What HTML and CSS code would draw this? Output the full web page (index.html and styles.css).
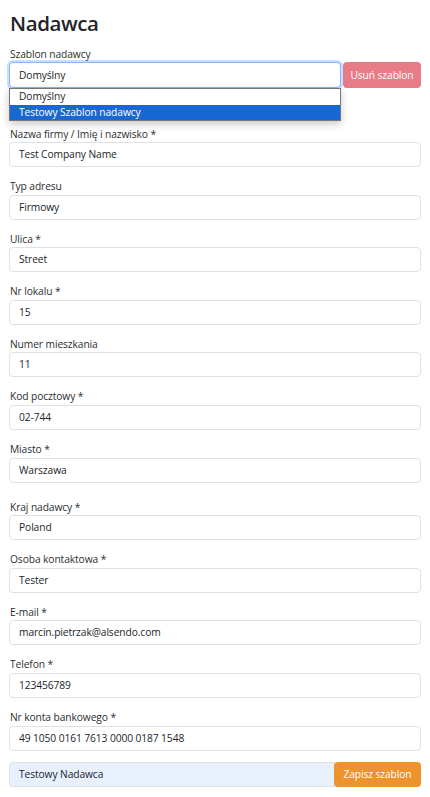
FILE: index.html
```html
<!DOCTYPE html>
<html lang="pl">
<head>
<meta charset="utf-8">
<title>Nadawca</title>
<link rel="stylesheet" href="styles.css">
</head>
<body>
<div class="page">
  <h1 class="title">Nadawca</h1>

  <div class="template-group">
    <label class="label">Szablon nadawcy</label>
    <div class="template-row">
      <div class="select-wrap">
        <div class="select focused">Domyślny</div>
        <div class="dropdown">
          <div class="option">Domyślny</div>
          <div class="option selected">Testowy Szablon nadawcy</div>
        </div>
      </div>
      <button class="btn btn-danger">Usuń szablon</button>
    </div>
  </div>

  <div class="field"><label class="label">Nazwa firmy / Imię i nazwisko *</label><div class="input">Test Company Name</div></div>
  <div class="field"><label class="label">Typ adresu</label><div class="input">Firmowy</div></div>
  <div class="field"><label class="label">Ulica *</label><div class="input">Street</div></div>
  <div class="field"><label class="label">Nr lokalu *</label><div class="input">15</div></div>
  <div class="field"><label class="label">Numer mieszkania</label><div class="input">11</div></div>
  <div class="field"><label class="label">Kod pocztowy *</label><div class="input">02-744</div></div>
  <div class="field"><label class="label">Miasto *</label><div class="input">Warszawa</div></div>
  <div class="field field-country"><label class="label">Kraj nadawcy *</label><div class="input">Poland</div></div>
  <div class="field"><label class="label">Osoba kontaktowa *</label><div class="input">Tester</div></div>
  <div class="field"><label class="label">E-mail *</label><div class="input">marcin.pietrzak@alsendo.com</div></div>
  <div class="field"><label class="label">Telefon *</label><div class="input">123456789</div></div>
  <div class="field"><label class="label">Nr konta bankowego *</label><div class="input">49 1050 0161 7613 0000 0187 1548</div></div>

  <div class="save-row">
    <div class="input autofill">Testowy Nadawca</div>
    <button class="btn btn-warning">Zapisz szablon</button>
  </div>
</div>
</body>
</html>
```

FILE: styles.css
```css
html, body {
  margin: 0;
  padding: 0;
  background: #ffffff;
}

body {
  font-family: "Open Sans", "Noto Sans", sans-serif;
  font-size: 10.25px;
  letter-spacing: -0.1px;
  color: #212529;
}

.page {
  padding: 0 9px;
}

.title {
  margin: 11px 0 10px 1px;
  font-size: 20.5px;
  line-height: 25px;
  font-weight: 600;
  letter-spacing: -0.4px;
  color: #212529;
}

.label {
  display: block;
  line-height: 16.5px;
  margin-left: 1px;
  color: #2b2f33;
}

.template-group .label {
  line-height: 16px;
}

.template-row {
  display: flex;
  gap: 2px;
  margin-bottom: 37.5px;
}

.select-wrap {
  position: relative;
  flex: 1;
}

.select {
  box-sizing: border-box;
  height: 26px;
  line-height: 24px;
  padding: 0 9px;
  border: 1px solid #dee2e6;
  border-radius: 4px;
  background: #fff;
}

.select.focused {
  border-color: #86b7fe;
  box-shadow: 0 0 0 2px rgba(13, 110, 253, 0.22);
}

.dropdown {
  position: absolute;
  left: 0;
  right: 0;
  top: 26px;
  border: 1px solid #767676;
  background: #fff;
  box-shadow: 0 3px 8px rgba(0, 0, 0, 0.22);
  z-index: 5;
}

.option {
  height: 15.5px;
  line-height: 15.5px;
  padding: 0 9px;
}

.option.selected {
  background: #1967d2;
  color: #fff;
}

.btn {
  box-sizing: border-box;
  height: 26px;
  border: 0;
  border-radius: 4px;
  font-family: inherit;
  font-size: 10.25px;
  letter-spacing: -0.1px;
  color: #fff;
  padding: 0 7px;
  white-space: nowrap;
}

.btn-danger {
  width: 78px;
  background: #e87c86;
}

.field {
  margin-bottom: 11.1px;
}

.field-country {
  padding-top: 5px;
}

.input {
  box-sizing: border-box;
  height: 25px;
  line-height: 23px;
  padding: 0 9px;
  border: 1px solid #dee2e6;
  border-radius: 4px;
  background: #fff;
}

.save-row {
  display: flex;
  height: 25.5px;
}

.save-row .input {
  flex: 1;
  height: 25.5px;
  border-radius: 4px 0 0 4px;
  border-right: 0;
}

.input.autofill {
  background: #e8f0fe;
}

.btn-warning {
  height: 25.5px;
  width: 87px;
  background: #ee922b;
  border-radius: 4px;
  margin-left: -1px;
}
```
